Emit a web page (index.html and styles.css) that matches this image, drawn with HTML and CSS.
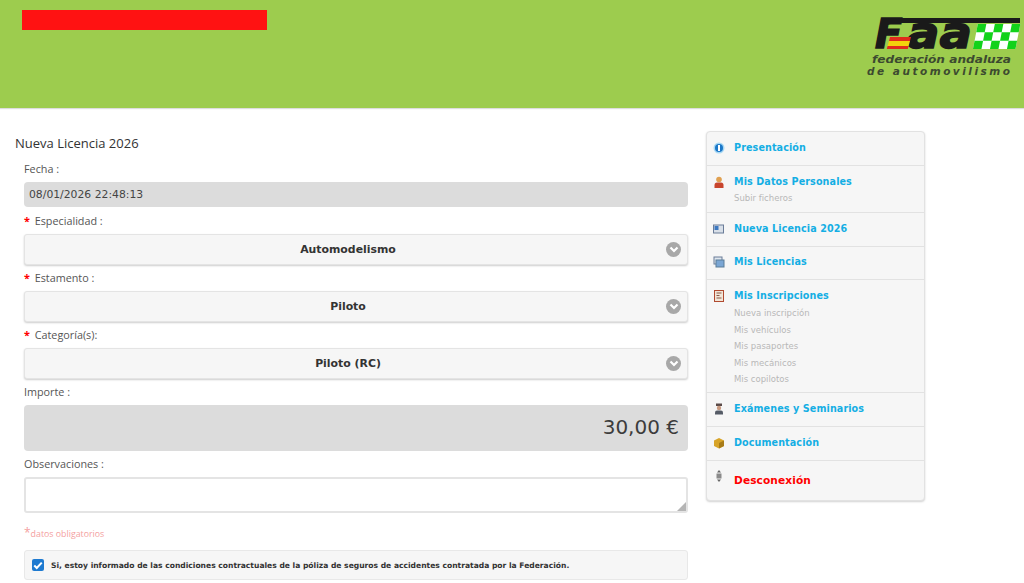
FILE: index.html
```html
<!DOCTYPE html>
<html lang="es">
<head>
<meta charset="utf-8">
<title>Nueva Licencia 2026</title>
<link rel="stylesheet" href="styles.css">
</head>
<body>
<header class="top">
  <div class="redbar"></div>
  <svg class="logo" width="156" height="60" viewBox="0 0 156 60" aria-label="FAA">
    <path class="lk" d="M24 0H156V5H30L20 8Z"/>
    <text class="faa f" x="11" y="30">F</text>
    <text class="faa" x="43" y="30" textLength="65" lengthAdjust="spacingAndGlyphs">aa</text>
    <path d="M26 19H47L46 23H25Z" fill="#e02b1c"/>
    <path d="M25 23H46L44.600 28H23.600Z" fill="#f4d20c"/>
    <path d="M23.600 28H44.600L43.800 31H22.800Z" fill="#e02b1c"/>
    <g transform="skewX(-11)">
      <rect x="115" y="6" width="42.500" height="25" fill="#fff"/>
      <path class="gr" d="M115 6h8.500v8.300H115zM132 6h8.500v8.300H132zM149 6h8.500v8.300H149zM123.500 14.300h8.500v8.400h-8.500zM140.500 14.300h8.500v8.400h-8.500zM115 22.700h8.500V31H115zM132 22.700h8.500V31H132zM149 22.700h8.500V31H149z"/>
    </g>
    <text class="lg1" x="8" y="44.500" textLength="139" lengthAdjust="spacingAndGlyphs">federación andaluza</text>
    <text class="lg2" x="3" y="57" textLength="143" lengthAdjust="spacing">de automovilismo</text>
  </svg>
</header>
<main class="page">
  <section class="content">
    <h1 class="title">Nueva Licencia 2026</h1>
    <form class="form">
      <div class="label">Fecha :</div>
      <div class="readonly">08/01/2026 22:48:13</div>
      <div class="label"><span class="star">*</span> Especialidad :</div>
      <div class="select">Automodelismo<span class="arrow"><svg width="10" height="8" viewBox="0 0 10 8"><path d="M1.500 1.500 5 5l3.500-3.500" fill="none" stroke="#fff" stroke-width="2.200"/></svg></span></div>
      <div class="label"><span class="star">*</span> Estamento :</div>
      <div class="select">Piloto<span class="arrow"><svg width="10" height="8" viewBox="0 0 10 8"><path d="M1.500 1.500 5 5l3.500-3.500" fill="none" stroke="#fff" stroke-width="2.200"/></svg></span></div>
      <div class="label"><span class="star">*</span> Categoría(s):</div>
      <div class="select">Piloto (RC)<span class="arrow"><svg width="10" height="8" viewBox="0 0 10 8"><path d="M1.500 1.500 5 5l3.500-3.500" fill="none" stroke="#fff" stroke-width="2.200"/></svg></span></div>
      <div class="label">Importe :</div>
      <div class="amount">30,00 €</div>
      <div class="label">Observaciones :</div>
      <div class="textarea"><svg class="grip" width="9" height="9" viewBox="0 0 9 9"><path d="M9 0V9H0Z" fill="#b5b5b5"/></svg></div>
      <div class="required"><span class="rstar">*</span>datos obligatorios</div>
      <label class="check">
        <span class="box"><svg width="12" height="10" viewBox="0 0 12 10"><path d="M1.500 5 4.500 8 10.500 1.500" fill="none" stroke="#fff" stroke-width="2.400"/></svg></span>
        Si, estoy informado de las condiciones contractuales de la póliza de seguros de accidentes contratada por la Federación.
      </label>
    </form>
  </section>
  <nav class="side">
    <div class="item i1">
      <div class="head"><svg class="ico" width="12" height="12" viewBox="0 0 12 12"><circle cx="6" cy="6" r="5.500" fill="#a8d8f4"/><circle cx="6" cy="6" r="4" fill="#1c78c8"/><rect x="5" y="3" width="2" height="6" fill="#fff"/></svg><a class="link">Presentación</a></div>
    </div>
    <div class="item i2">
      <div class="head"><svg class="ico" width="12" height="12" viewBox="0 0 12 12"><circle cx="6" cy="3.500" r="2.800" fill="#e0a050"/><path d="M1.500 12V9Q1.500 6.500 4 6.500H8Q10.500 6.500 10.500 9V12Z" fill="#c8452c"/></svg><a class="link">Mis Datos Personales</a></div>
      <div class="sub">Subir ficheros</div>
    </div>
    <div class="item i1">
      <div class="head"><svg class="ico" width="12" height="12" viewBox="0 0 12 12"><rect x=".5" y="2" width="10" height="8" fill="#d8dfe8" stroke="#6a7c98"/><rect x="1.500" y="3" width="4" height="4" fill="#3c78c0"/></svg><a class="link">Nueva Licencia 2026</a></div>
    </div>
    <div class="item i1">
      <div class="head"><svg class="ico" width="12" height="12" viewBox="0 0 12 12"><rect x="1" y="1" width="8" height="7" fill="#dfe6ee" stroke="#6a7c98"/><rect x="3" y="4" width="8" height="7" fill="#7aa6d4" stroke="#5a7c98"/></svg><a class="link">Mis Licencias</a></div>
    </div>
    <div class="item i3">
      <div class="head"><svg class="ico" width="12" height="12" viewBox="0 0 12 12"><rect x="1.500" y=".5" width="9" height="11" fill="#f2e6d8" stroke="#b04a30"/><path d="M3.500 3h5M3.500 5.500h3M3.500 8h5" stroke="#8a5a48"/></svg><a class="link">Mis Inscripciones</a></div>
      <div class="sub">Nueva inscripción</div>
      <div class="sub">Mis vehículos</div>
      <div class="sub">Mis pasaportes</div>
      <div class="sub">Mis mecánicos</div>
      <div class="sub">Mis copilotos</div>
    </div>
    <div class="item i1">
      <div class="head"><svg class="ico" width="12" height="12" viewBox="0 0 12 12"><rect x="3" y=".5" width="6" height="2.500" fill="#5a4a48"/><circle cx="6" cy="5" r="2.200" fill="#c89a80"/><path d="M2 11.500V9.500Q2 7.500 4 7.500H8Q10 7.500 10 9.500V11.500Z" fill="#555b66"/></svg><a class="link">Exámenes y Seminarios</a></div>
    </div>
    <div class="item i1">
      <div class="head"><svg class="ico" width="12" height="12" viewBox="0 0 12 12"><path d="M1 3.500 6 1l5 2.500V9l-5 2.500L1 9Z" fill="#d8a428"/><path d="M6 6v5.500L11 9V3.500Z" fill="#a87c18"/></svg><a class="link">Documentación</a></div>
    </div>
    <div class="item last">
      <div class="head"><svg class="ico up" width="12" height="14" viewBox="0 0 12 14"><path d="M4 3.500 6 1l2 2.500ZM4 10.500 6 13l2-2.500Z" fill="#666"/><rect x="3.500" y="4.500" width="5" height="5" fill="#8a8a8a"/></svg><a class="link exit">Desconexión</a></div>
    </div>
  </nav>
</main>
</body>
</html>
```
FILE: styles.css
```css
* { box-sizing: border-box; }
html, body { margin: 0; height: 583px; overflow: hidden; background: #fff; }
body { font-family: "Open Sans", "Noto Sans", sans-serif; color: #444; }

.top { height: 108px; background: #9dcc4e; padding: 10px 4px 0 22px; display: flex; justify-content: space-between; align-items: flex-start; box-shadow: 0 1px 1px #ddd; }
.redbar { width: 245px; height: 20px; background: #ff1212; }
.logo { margin-top: 8px; overflow: visible; }
.lk { fill: #1a1a1a; }
.faa { font: italic 700 45px "DejaVu Sans", sans-serif; fill: #1a1a1a; stroke: #1a1a1a; stroke-width: 1.500px; }
.faa.f { font-size: 40px; }
.gr { fill: #12d21a; }
.lg1, .lg2 { font: italic 700 10.500px "DejaVu Sans", sans-serif; fill: #3c4a30; }

.page { display: flex; align-items: flex-start; padding: 23px 0 0 15px; }
.content { width: 673px; }
.title { margin: 0 0 6px; font-size: 13px; font-weight: 400; line-height: 24px; color: #333; }
.form { margin-left: 9px; }
.label { font-size: 10.800px; line-height: 16px; color: #555; margin-bottom: 5px; }
.star { color: #f00; font-weight: 700; margin-right: 2px; }
.readonly { height: 25px; background: #dcdcdc; border-radius: 4px; font: 10.800px/25px "DejaVu Sans", sans-serif; color: #444; padding-left: 5px; margin-bottom: 6px; }
.select { position: relative; height: 31px; background: #f6f6f6; border: 1px solid #e4e4e4; border-radius: 3px; box-shadow: 0 1px 2px rgba(0,0,0,.2); font: 700 10.900px/29px "DejaVu Sans", sans-serif; color: #333; text-align: center; padding-right: 16px; margin-bottom: 5px; }
.arrow { position: absolute; right: 6px; top: 7px; width: 15px; height: 15px; border-radius: 50%; background: #a8a8a8; display: flex; align-items: center; justify-content: center; }
.amount { height: 46px; background: #dcdcdc; border-radius: 4px; font: 20px/44px "DejaVu Sans", sans-serif; color: #3c3c3c; text-align: right; padding-right: 9px; margin-bottom: 5px; }
.textarea { position: relative; height: 36px; background: #fff; border: 2px solid #e4e4e4; border-radius: 3px; }
.grip { position: absolute; right: 0; bottom: 0; }
.required { margin-top: 12px; font-size: 8.800px; line-height: 16px; color: #f4a0a0; }
.rstar { font-size: 12px; }
.check { margin-top: 8px; height: 30px; display: flex; align-items: center; gap: 7px; padding-left: 7px; background: #f6f6f6; border: 1px solid #e8e8e8; border-radius: 3px; font: 700 7.580px "DejaVu Sans", sans-serif; color: #333; }
.box { width: 12px; height: 12px; border-radius: 2px; background: #1e7ad0; display: flex; align-items: center; justify-content: center; flex: none; }
.box svg { width: 10px; height: 9px; }

.side { margin-left: 18px; width: 219px; height: 370px; background: #f6f6f6; border: 1px solid #e2e2e2; border-radius: 4px; box-shadow: 0 1px 2px rgba(0,0,0,.18); font-family: "DejaVu Sans", sans-serif; }
.item { padding: 7.800px 0 0 6px; border-bottom: 1px solid #e2e2e2; }
.i1 { height: 33.800px; }
.i2 { height: 47px; }
.i3 { height: 112.800px; }
.last { border-bottom: 0; }
.head { display: flex; align-items: flex-start; height: 15px; }
.ico { flex: none; margin: 2px 9px 0 0; }
.ico.up { margin-top: 0; }
.link { font-size: 9.600px; font-weight: 700; line-height: 15px; color: #14aee4; letter-spacing: .1px; }
.exit { color: #f00; font-size: 10.600px; margin-top: 4px; }
.sub { margin-left: 21px; font-size: 8.500px; line-height: 16.500px; color: #b8b8b8; }
.i2 .sub { margin-top: 1px; }
.i3 .head + .sub { margin-top: 2px; }
```
